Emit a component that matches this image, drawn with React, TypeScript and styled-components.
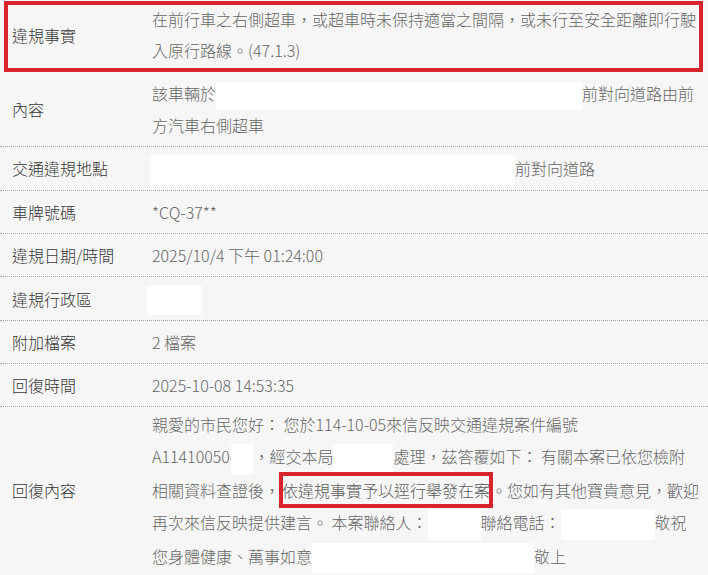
import React from "react";
import styled, { createGlobalStyle } from "styled-components";

const Global = createGlobalStyle`
  html, body { margin: 0; padding: 0; background: #f6f6f6; }
  body {
    font-family: "Noto Sans CJK TC", "Noto Sans", sans-serif;
    font-weight: 300;
    -webkit-font-smoothing: antialiased;
  }
`;

const Table = styled.div`
  width: 708px;
  background: #f6f6f6;
`;

const Row = styled.div<{ $highlight?: boolean; $tight?: boolean }>`
  position: relative;
  display: grid;
  grid-template-columns: 152px 1fr;
  align-items: center;
  padding: ${(p) => (p.$highlight ? "4px 0 5px" : p.$tight ? "1px 0 6px" : "6px 0 5px")};
  border-bottom: 1px dotted #a8a8a8;
  ${(p) =>
    p.$highlight
      ? `
    border-bottom-color: transparent;
    &::after {
      content: "";
      position: absolute;
      top: 1px;
      left: 4px;
      right: 5px;
      bottom: -1px;
      border: 4px solid #d8252d;
      pointer-events: none;
    }
  `
      : ""}
`;

const Label = styled.div`
  padding-left: 12px;
  font-size: 16px;
  line-height: 31px;
  color: #363636;
  white-space: nowrap;
`;

const Value = styled.div<{ $lh?: number }>`
  font-size: 16px;
  line-height: ${(p) => p.$lh ?? 31}px;
  color: #666666;
  white-space: nowrap;
`;

const Redact = styled.span<{ $w: number; $h?: number; $shift?: number }>`
  display: inline-block;
  width: ${(p) => p.$w}px;
  height: ${(p) => p.$h ?? 28}px;
  margin-left: ${(p) => p.$shift ?? 0}px;
  background: #ffffff;
  vertical-align: middle;
`;

const Mark = styled.span`
  display: inline-block;
  line-height: 30px;
  outline: 4px solid #d8252d;
  outline-offset: -1px;
  margin: 0 1px 0 2px;
  color: #5a5a5a;
`;

export default function App() {
  return (
    <>
      <Global />
      <Table>
        <Row $highlight>
          <Label>違規事實</Label>
          <Value>
            在前行車之右側超車，或超車時未保持適當之間隔，或未行至安全距離即行駛
            <br />
            入原行路線。(47.1.3)
          </Value>
        </Row>
        <Row>
          <Label>內容</Label>
          <Value>
            該車輛於
            <Redact $w={366} />
            前對向道路由前
            <br />
            方汽車右側超車
          </Value>
        </Row>
        <Row>
          <Label>交通違規地點</Label>
          <Value>
            <Redact $w={365} $h={30} $shift={-2} />
            前對向道路
          </Value>
        </Row>
        <Row>
          <Label>車牌號碼</Label>
          <Value>*CQ-37**</Value>
        </Row>
        <Row>
          <Label>違規日期/時間</Label>
          <Value>2025/10/4 下午 01:24:00</Value>
        </Row>
        <Row>
          <Label>違規行政區</Label>
          <Value>
            <Redact $w={55} $h={29} $shift={-5} />
          </Value>
        </Row>
        <Row>
          <Label>附加檔案</Label>
          <Value>2 檔案</Value>
        </Row>
        <Row>
          <Label>回復時間</Label>
          <Value>2025-10-08 14:53:35</Value>
        </Row>
        <Row $tight>
          <Label>回復內容</Label>
          <Value $lh={32}>
            親愛的市民您好： 您於114-10-05來信反映交通違規案件編號
            <br />
            A114100504
            <Redact $w={22} $h={30} $shift={-7} />
            ，經交本局
            <Redact $w={60} $h={30} />
            處理，茲答覆如下： 有關本案已依您檢附
            <br />
            相關資料查證後，<Mark>依違規事實予以逕行舉發在案</Mark>。您如有其他寶貴意見，歡迎
            <br />
            再次來信反映提供建言。 本案聯絡人：
            <Redact $w={53} $h={30} />
            聯絡電話：
            <Redact $w={94} $h={30} />
            敬祝
            <br />
            您身體健康、萬事如意
            <Redact $w={222} $h={30} />
            敬上
          </Value>
        </Row>
      </Table>
    </>
  );
}
